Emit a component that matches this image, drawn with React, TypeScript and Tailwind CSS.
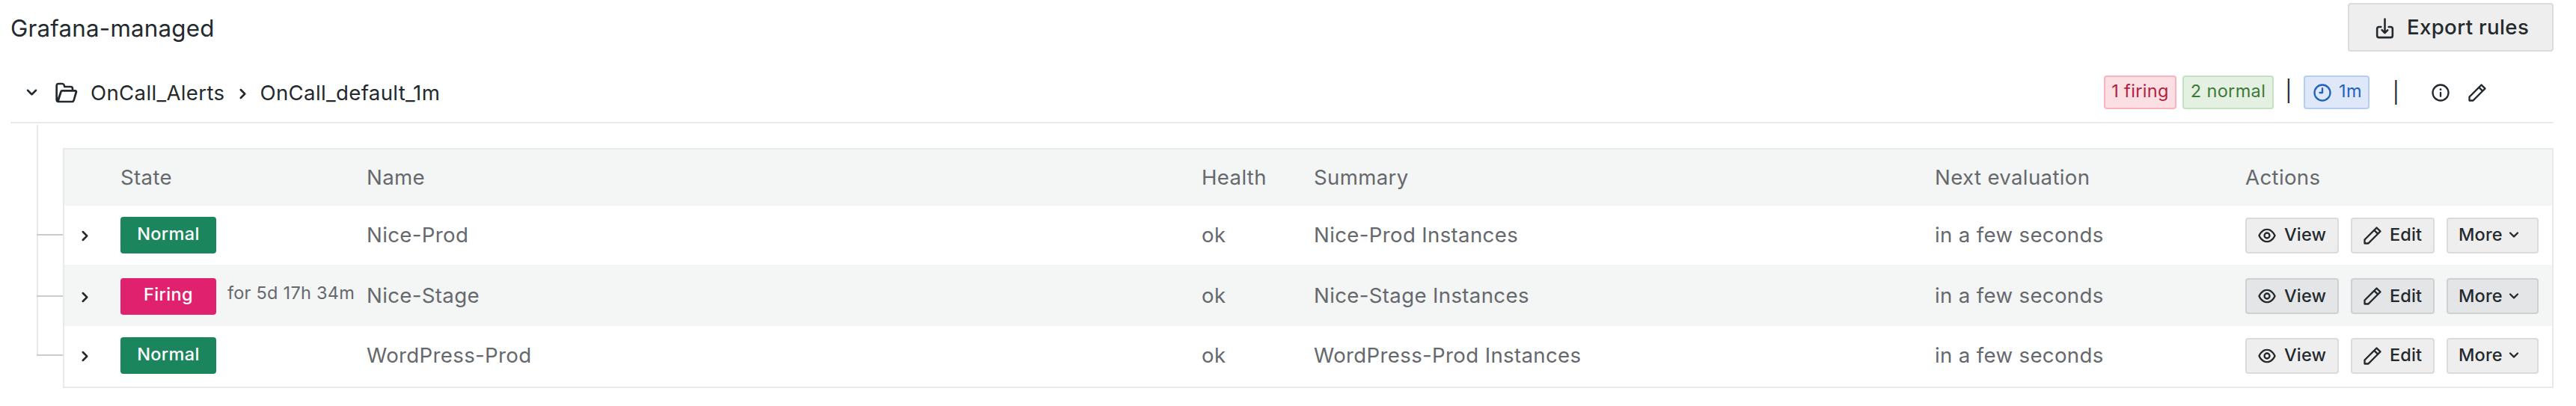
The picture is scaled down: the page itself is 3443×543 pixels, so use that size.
import { ReactNode } from "react";

type IconName = "down" | "right" | "pen" | "eye" | "info" | "clock" | "folder" | "import";

const paths: Record<IconName, string> = {
  down: "M17,9.17a1,1,0,0,0-1.41,0L12,12.71,8.46,9.17a1,1,0,0,0-1.41,0,1,1,0,0,0,0,1.42l4.24,4.24a1,1,0,0,0,1.42,0L17,10.59A1,1,0,0,0,17,9.17Z",
  right:
    "M14.83,11.29,10.59,7.05a1,1,0,0,0-1.42,0,1,1,0,0,0,0,1.41L12.71,12,9.17,15.54a1,1,0,0,0,0,1.41,1,1,0,0,0,.71.29,1,1,0,0,0,.71-.29l4.24-4.24A1,1,0,0,0,14.83,11.29Z",
  pen: "M22,7.24a1,1,0,0,0-.29-.71L17.47,2.29A1,1,0,0,0,16.76,2a1,1,0,0,0-.71.29L13.22,5.12h0L2.29,16.05a1,1,0,0,0-.29.71V21a1,1,0,0,0,1,1H7.24A1,1,0,0,0,8,21.71L18.87,10.78h0L21.71,8a1.19,1.19,0,0,0,.22-.33,1,1,0,0,0,0-.24.7.7,0,0,0,0-.14ZM6.83,20H4V17.17l9.93-9.93,2.83,2.83ZM18.17,8.66,15.34,5.83l1.42-1.41,2.82,2.82Z",
  eye: "M21.92,11.6C19.9,6.91,16.1,4,12,4S4.1,6.91,2.08,11.6a1,1,0,0,0,0,.8C4.1,17.09,7.9,20,12,20s7.9-2.91,9.92-7.6A1,1,0,0,0,21.92,11.6ZM12,18c-3.17,0-6.17-2.29-7.9-6C5.83,8.29,8.83,6,12,6s6.17,2.29,7.9,6C18.17,15.71,15.17,18,12,18ZM12,8a4,4,0,1,0,4,4A4,4,0,0,0,12,8Zm0,6a2,2,0,1,1,2-2A2,2,0,0,1,12,14Z",
  info: "M12,2A10,10,0,1,0,22,12,10,10,0,0,0,12,2Zm0,18a8,8,0,1,1,8-8A8,8,0,0,1,12,20Zm0-9a1,1,0,0,0-1,1v4a1,1,0,0,0,2,0V12A1,1,0,0,0,12,11Zm0-4a1.25,1.25,0,1,0,1.25,1.25A1.25,1.25,0,0,0,12,7Z",
  clock:
    "M12,2A10,10,0,1,0,22,12,10,10,0,0,0,12,2Zm0,18a8,8,0,1,1,8-8A8,8,0,0,1,12,20ZM12,6a1,1,0,0,0-1,1v4H9a1,1,0,0,0,0,2h3a1,1,0,0,0,1-1V7A1,1,0,0,0,12,6Z",
  folder:
    "M22.3,9.8A1.9,1.9,0,0,0,20.8,9H19V8a3,3,0,0,0-3-3H10.7L10.4,4A3,3,0,0,0,7.6,2H4A3,3,0,0,0,1,5V19a3,3,0,0,0,3,3H17.4a3,3,0,0,0,2.8-2.1L22.7,11.4A1.9,1.9,0,0,0,22.3,9.8ZM3,17.5V5A1,1,0,0,1,4,4H7.6a1,1,0,0,1,1,.7l.5,1.6a1,1,0,0,0,1,.7H16a1,1,0,0,1,1,1V9H7.4a2,2,0,0,0-1.9,1.4ZM18.3,19.3a1,1,0,0,1-1,.7H4.6l2.8-9H20.6Z",
  import:
    "M8.3,12.6a1,1,0,0,0,0,1.4l3,3a1,1,0,0,0,1.4,0l3-3a1,1,0,0,0-1.4-1.4L13,13.9V2a1,1,0,0,0-2,0V13.9L9.7,12.6a1,1,0,0,0-1.4,0ZM18,9H16a1,1,0,0,0,0,2h2a1,1,0,0,1,1,1v7a1,1,0,0,1-1,1H6a1,1,0,0,1-1-1V12a1,1,0,0,1,1-1H8A1,1,0,0,0,8,9H6a3,3,0,0,0-3,3v7a3,3,0,0,0,3,3H18a3,3,0,0,0,3-3V12A3,3,0,0,0,18,9Z",
};

function Icon({ name, className }: { name: IconName; className: string }) {
  return (
    <svg viewBox="0 0 24 24" fill="currentColor" className={`shrink-0 ${className}`}>
      <path d={paths[name]} />
    </svg>
  );
}

interface IRule {
  state: "Normal" | "Firing";
  activeFor?: string;
  name: string;
  health: string;
  summary: string;
  nextEvaluation: string;
}

const rules: IRule[] = [
  {
    state: "Normal",
    name: "Nice-Prod",
    health: "ok",
    summary: "Nice-Prod Instances",
    nextEvaluation: "in a few seconds",
  },
  {
    state: "Firing",
    activeFor: "for 5d 17h 34m",
    name: "Nice-Stage",
    health: "ok",
    summary: "Nice-Stage Instances",
    nextEvaluation: "in a few seconds",
  },
  {
    state: "Normal",
    name: "WordPress-Prod",
    health: "ok",
    summary: "WordPress-Prod Instances",
    nextEvaluation: "in a few seconds",
  },
];

const columns =
  "grid grid-cols-[75px_329px_1116px_150px_830px_415px_1fr] items-center";

function ActionButton({ className, children }: { className: string; children: ReactNode }) {
  return (
    <button
      className={`flex h-12 items-center rounded-[4px] border-2 pb-px text-[23.5px] leading-none font-medium tracking-[0.15px] text-[#24292e] ${className}`}
    >
      {children}
    </button>
  );
}

interface IRuleRow {
  rule: IRule;
  odd: boolean;
  last: boolean;
}

function RuleRow({ rule, odd, last }: IRuleRow) {
  const firing = rule.state === "Firing";
  const button = odd ? "bg-[#e3e5e7] border-[#ced0d3]" : "bg-[#eeeeee] border-[#d9dbdd]";

  return (
    <div className="flex">
      {/* branch of the tree guide */}
      <div className="flex w-[35px] shrink-0 flex-col">
        <div className="h-[38px] border-l-2 border-[#e8e9e9]" />
        <div className={odd ? "h-[3px] border-l-2 border-[#e8e9e9]" : ""} />
        <div className="h-[2px] bg-[#cccccc]" />
        {!last && <div className="flex-1 border-l-2 border-[#e8e9e9]" />}
      </div>
      <div
        className={`${columns} flex-1 border-x-2 border-[#e8e9e9] text-[27.6px] ${
          odd
            ? "h-[82px] bg-[#f4f5f5] pt-[2px]"
            : last
              ? "h-[83px] border-b-2 pb-[2px]"
              : "h-[79px]"
        }`}
      >
        <Icon name="right" className="ml-3 mt-[2px] size-[31px] text-[#24292e]" />
        <div className="flex items-center">
          <span
            className={`flex h-[49px] w-32 shrink-0 items-center justify-center rounded-[4px] pb-1 text-[23.5px] leading-none font-medium text-white ${
              firing ? "bg-[#e0226e]" : "bg-[#1b855e]"
            }`}
          >
            {rule.state}
          </span>
          {rule.activeFor && (
            <span className="ml-[15px] pb-2 text-[23.5px] tracking-[0.25px] whitespace-nowrap">
              {rule.activeFor}
            </span>
          )}
        </div>
        <span>{rule.name}</span>
        <span>{rule.health}</span>
        <span>{rule.summary}</span>
        <span>{rule.nextEvaluation}</span>
        <div className="flex gap-4">
          <ActionButton className={`w-[125px] pl-[13px] ${button}`}>
            <Icon name="eye" className="mr-[9px] mt-px size-[28px]" />
            View
          </ActionButton>
          <ActionButton className={`w-[112px] pl-[13px] ${button}`}>
            <Icon name="pen" className="mr-[9px] mt-px size-[28px]" />
            Edit
          </ActionButton>
          <ActionButton className={`w-[123px] pl-[14px] ${button}`}>
            More
            <Icon name="down" className="ml-px size-[28px]" />
          </ActionButton>
        </div>
      </div>
    </div>
  );
}

export default function App() {
  return (
    <div className="h-[543px] w-[3443px] overflow-hidden bg-white pl-[14px] pr-[30px] pt-[4px] font-[Inter,sans-serif] tracking-[0.35px] text-[#65686d]">
      <header className="flex h-[65px] items-start justify-between">
        <h4 className="pt-[11px] text-[31.3px] leading-[46px] tracking-[0.2px] text-[#24292e]">
          Grafana-managed
        </h4>
        <button className="flex h-[65px] w-[275px] items-center rounded-[4px] border-2 border-[#d9dbdd] bg-[#eeeeee] pl-[32px] text-[27.6px] font-medium text-[#24292e]">
          <Icon name="import" className="mr-[14px] mt-1 size-[31px]" />
          Export rules
        </button>
      </header>

      <div className="flex h-[96px] items-center border-b-2 border-[#e8e9e9] pt-[17px] pb-[2px] text-[27.6px] text-[#24292e]">
        <Icon name="down" className="ml-[13px] size-[31px]" />
        <Icon name="folder" className="ml-[15px] size-[32px]" />
        <span className="ml-4 pt-[2px]">OnCall_Alerts</span>
        <Icon name="right" className="mx-2 mt-1 size-[31px]" />
        <span className="pt-[2px]">OnCall_default_1m</span>
        <div className="ml-auto flex items-center text-[23.5px] leading-none">
          <span className="flex h-[45px] w-[97px] items-center justify-center rounded-[4px] border-2 border-[#f9b4bf] bg-[#fbdfe3] pb-1 text-[#b3203f]">
            1 firing
          </span>
          <span className="ml-2 flex h-[45px] w-[122px] items-center justify-center rounded-[4px] border-2 border-[#c3e2bf] bg-[#e4f1e2] pb-1 text-[#3e7a37]">
            2 normal
          </span>
          <span className="w-10 pb-[2px] text-center text-[27.6px]">|</span>
          <span className="flex h-[45px] w-[88px] items-center rounded-[4px] border-2 border-[#b4cdf5] bg-[#dfe8f8] pl-[9px] pb-1 text-[#1f62c0]">
            <Icon name="clock" className="mr-2 mt-1 size-[28px]" />
            1m
          </span>
          <span className="w-[71px] pt-[2px] text-center text-[27.6px]">|</span>
          <Icon name="info" className="ml-[10px] size-[28px]" />
          <Icon name="pen" className="ml-[21px] mr-[88px] size-[28px]" />
        </div>
      </div>

      <div className="ml-[35px]">
        <div className="flex">
          <div className="mt-[2px] w-[35px] shrink-0 border-l-2 border-[#e8e9e9]" />
          <div
            className={`${columns} mt-[33px] h-[77px] flex-1 border-2 border-b-0 border-[#e8e9e9] bg-[#f4f5f5] text-[27.6px]`}
          >
            <span />
            <span>State</span>
            <span>Name</span>
            <span>Health</span>
            <span>Summary</span>
            <span>Next evaluation</span>
            <span>Actions</span>
          </div>
        </div>
        {rules.map((rule, index) => (
          <RuleRow
            key={rule.name}
            rule={rule}
            odd={index % 2 === 1}
            last={index === rules.length - 1}
          />
        ))}
      </div>
    </div>
  );
}
